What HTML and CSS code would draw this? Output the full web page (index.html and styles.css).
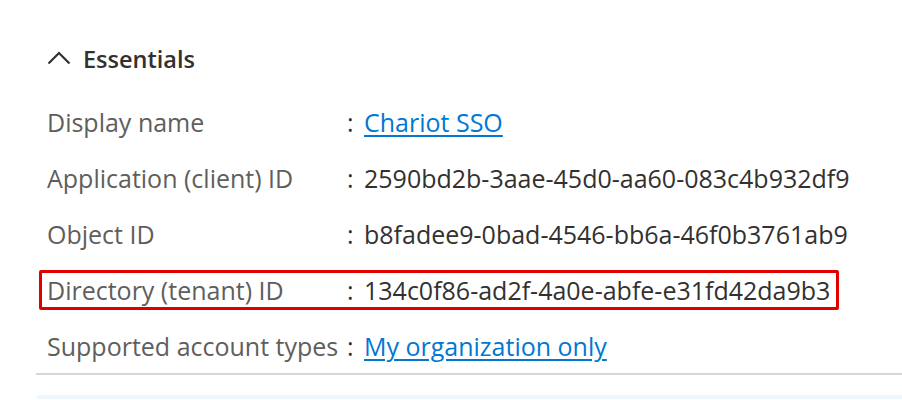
FILE: index.html
```html
<!DOCTYPE html>
<html lang="en">
<head>
<meta charset="utf-8">
<title>Essentials</title>
<link rel="stylesheet" href="styles.css">
</head>
<body>
<section class="essentials">
  <header class="essentials-header">
    <svg class="chevron" width="24" height="14" viewBox="0 0 24 14" aria-hidden="true">
      <path d="M1.5 12.5 L12 2 L22.5 12.5" fill="none" stroke="#323130" stroke-width="2.2"/>
    </svg>
    <h2 class="essentials-title">Essentials</h2>
  </header>
  <div class="props">
    <div class="prop">
      <span class="prop-label">Display name</span>
      <span class="prop-colon">:</span>
      <a class="prop-link" href="#">Chariot SSO</a>
    </div>
    <div class="prop">
      <span class="prop-label">Application (client) ID</span>
      <span class="prop-colon">:</span>
      <span class="prop-value">2590bd2b-3aae-45d0-aa60-083c4b932df9</span>
    </div>
    <div class="prop">
      <span class="prop-label">Object ID</span>
      <span class="prop-colon">:</span>
      <span class="prop-value">b8fadee9-0bad-4546-bb6a-46f0b3761ab9</span>
    </div>
    <div class="prop prop-highlight">
      <span class="prop-label">Directory (tenant) ID</span>
      <span class="prop-colon">:</span>
      <span class="prop-value">134c0f86-ad2f-4a0e-abfe-e31fd42da9b3</span>
    </div>
    <div class="prop">
      <span class="prop-label">Supported account types</span>
      <span class="prop-colon">:</span>
      <a class="prop-link" href="#">My organization only</a>
    </div>
  </div>
  <div class="divider"></div>
  <div class="info-strip"></div>
</section>
</body>
</html>
```
FILE: styles.css
```css
html, body {
  margin: 0;
  padding: 0;
  background: #ffffff;
}
body {
  font-family: "Open Sans", "Noto Sans", "Liberation Sans", sans-serif;
  width: 902px;
  height: 400px;
  overflow: hidden;
}
.essentials {
  padding-top: 43px;
  padding-left: 36px;
}
.essentials-header {
  display: flex;
  align-items: center;
  gap: 12px;
  height: 32px;
  padding-left: 11px;
}
.chevron {
  display: block;
  margin-top: -2px;
}
.essentials-title {
  margin: 0;
  font-size: 23.5px;
  font-weight: 600;
  color: #323130;
  line-height: 32px;
}
.props {
  display: flex;
  flex-direction: column;
  gap: 16px;
  margin-top: 27px;
  padding-left: 11px;
}
.prop {
  display: flex;
  align-items: center;
  height: 40px;
  box-sizing: border-box;
  font-size: 25px;
  width: fit-content;
}
.prop-label {
  width: 300px;
  color: #605e5c;
  white-space: nowrap;
}
.prop-colon {
  width: 17px;
  color: #323130;
}
.prop-value {
  color: #323130;
  white-space: nowrap;
}
.prop-link {
  color: #0078d4;
  text-decoration: underline;
  text-decoration-thickness: 2px;
  text-underline-offset: 3px;
  white-space: nowrap;
}
.prop-highlight {
  border: 3px solid #e00000;
  border-radius: 2px;
  margin-left: -8px;
  padding-left: 5px;
  padding-right: 6px;
}
.divider {
  height: 2px;
  background: #d6d6d6;
  margin-top: 7px;
}
.info-strip {
  margin-top: 20px;
  height: 4px;
  background: #eff6fc;
  border-radius: 4px 0 0 0;
}
```
